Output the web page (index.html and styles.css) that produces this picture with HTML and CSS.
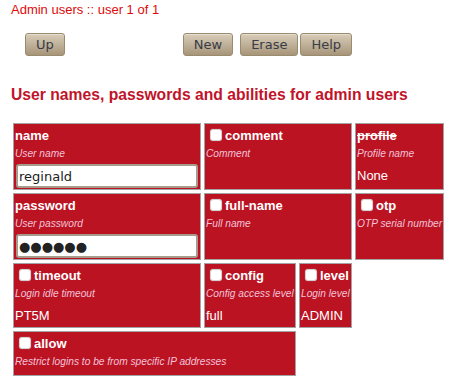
FILE: index.html
```html
<!DOCTYPE html>
<html lang="en">
<head>
<meta charset="utf-8">
<title>Admin users</title>
<link rel="stylesheet" href="styles.css">
</head>
<body>
<div class="crumb">Admin users :: user 1 of 1</div>
<div class="toolbar">
  <button class="btn">Up</button>
  <div class="actions">
    <button class="btn btn-new">New</button>
    <button class="btn">Erase</button>
    <button class="btn">Help</button>
  </div>
</div>
<h1 class="heading">User names, passwords and abilities for admin users</h1>
<div class="grid">
  <div class="cell c1">
    <div class="title">name</div>
    <div class="desc">User name</div>
    <input class="field" type="text" value="reginald">
  </div>
  <div class="cell c23">
    <div class="title"><input class="check" type="checkbox">comment</div>
    <div class="desc">Comment</div>
  </div>
  <div class="cell c4">
    <div class="title strike">profile</div>
    <div class="desc">Profile name</div>
    <div class="value">None</div>
  </div>

  <div class="cell c1">
    <div class="title">password</div>
    <div class="desc">User password</div>
    <input class="field" type="text" value="●●●●●●">
  </div>
  <div class="cell c23">
    <div class="title"><input class="check" type="checkbox">full-name</div>
    <div class="desc">Full name</div>
  </div>
  <div class="cell c4">
    <div class="title"><input class="check" type="checkbox">otp</div>
    <div class="desc">OTP serial number</div>
  </div>

  <div class="cell c1">
    <div class="title"><input class="check" type="checkbox">timeout</div>
    <div class="desc">Login idle timeout</div>
    <div class="value">PT5M</div>
  </div>
  <div class="cell c2">
    <div class="title"><input class="check" type="checkbox">config</div>
    <div class="desc">Config access level</div>
    <div class="value">full</div>
  </div>
  <div class="cell c3">
    <div class="title"><input class="check" type="checkbox">level</div>
    <div class="desc">Login level</div>
    <div class="value">ADMIN</div>
  </div>

  <div class="cell c12">
    <div class="title"><input class="check" type="checkbox">allow</div>
    <div class="desc">Restrict logins to be from specific IP addresses</div>
  </div>
</div>
</body>
</html>
```
FILE: styles.css
```css
html, body {
  margin: 0;
  padding: 0;
  background: #fff;
}
body {
  font-family: "Liberation Sans", Arial, sans-serif;
  font-size: 13px;
}
.crumb {
  padding: 2px 0 0 11px;
  line-height: 15px;
  color: #dd0a0a;
}
.toolbar {
  display: flex;
  align-items: center;
  margin-top: 16px;
  padding-left: 25px;
  height: 23px;
}
.actions {
  display: flex;
  gap: 2px;
  margin-left: 118px;
}
.btn {
  font-family: "DejaVu Sans", sans-serif;
  font-size: 13px;
  color: #383b48;
  height: 23px;
  padding: 0 10px;
  margin: 0;
  border: 1px solid #9a8a6e;
  border-radius: 3px;
  background: linear-gradient(#d8cdb9, #a79579);
  box-shadow: inset 0 1px 0 rgba(255,255,255,0.35);
}
.btn-new {
  margin-right: 5px;
}
.heading {
  margin: 29px 0 0 11px;
  font-size: 15.7px;
  line-height: 20px;
  font-weight: bold;
  color: #c0142a;
}
.grid {
  display: grid;
  grid-template-columns: 188px 92px 53px 89px;
  gap: 3px;
  margin-top: 18px;
  padding-left: 13px;
  align-items: stretch;
}
.cell {
  background: #bb1322;
  border: 1px solid #a3a3a3;
  padding: 1px;
  color: #fff;
  overflow: hidden;
  white-space: nowrap;
}
.c1 { grid-column: 1; }
.c2 { grid-column: 2; }
.c3 { grid-column: 3; }
.c4 { grid-column: 4; }
.c23 { grid-column: 2 / span 2; }
.c12 { grid-column: 1 / span 2; }
.c12 .desc { margin-bottom: 5px; }
.title {
  font-weight: bold;
  font-size: 13px;
  line-height: 22px;
}
.strike {
  text-decoration: line-through;
}
.check {
  appearance: none;
  -webkit-appearance: none;
  width: 12px;
  height: 12px;
  margin: 0 3px 0 4px;
  vertical-align: -1px;
  background: #fff;
  border: 1px solid #d0d0d0;
  border-radius: 3px;
  box-shadow: 0 0 1px rgba(255,255,255,0.6);
}
.desc {
  font-style: italic;
  font-size: 10.2px;
  line-height: 14px;
  color: #f2c2d8;
  margin-bottom: 3px;
}
.value {
  font-size: 13px;
  line-height: 20px;
  margin-top: 5px;
}
.field {
  display: block;
  box-sizing: border-box;
  width: calc(100% - 2px);
  height: 24px;
  margin: 3px 1px 0 1px;
  padding: 0 1px;
  font-family: "DejaVu Sans", sans-serif;
  font-size: 13px;
  color: #222;
  background: #fff;
  border: 2px solid #a59c8e;
  border-radius: 3px;
}
```
